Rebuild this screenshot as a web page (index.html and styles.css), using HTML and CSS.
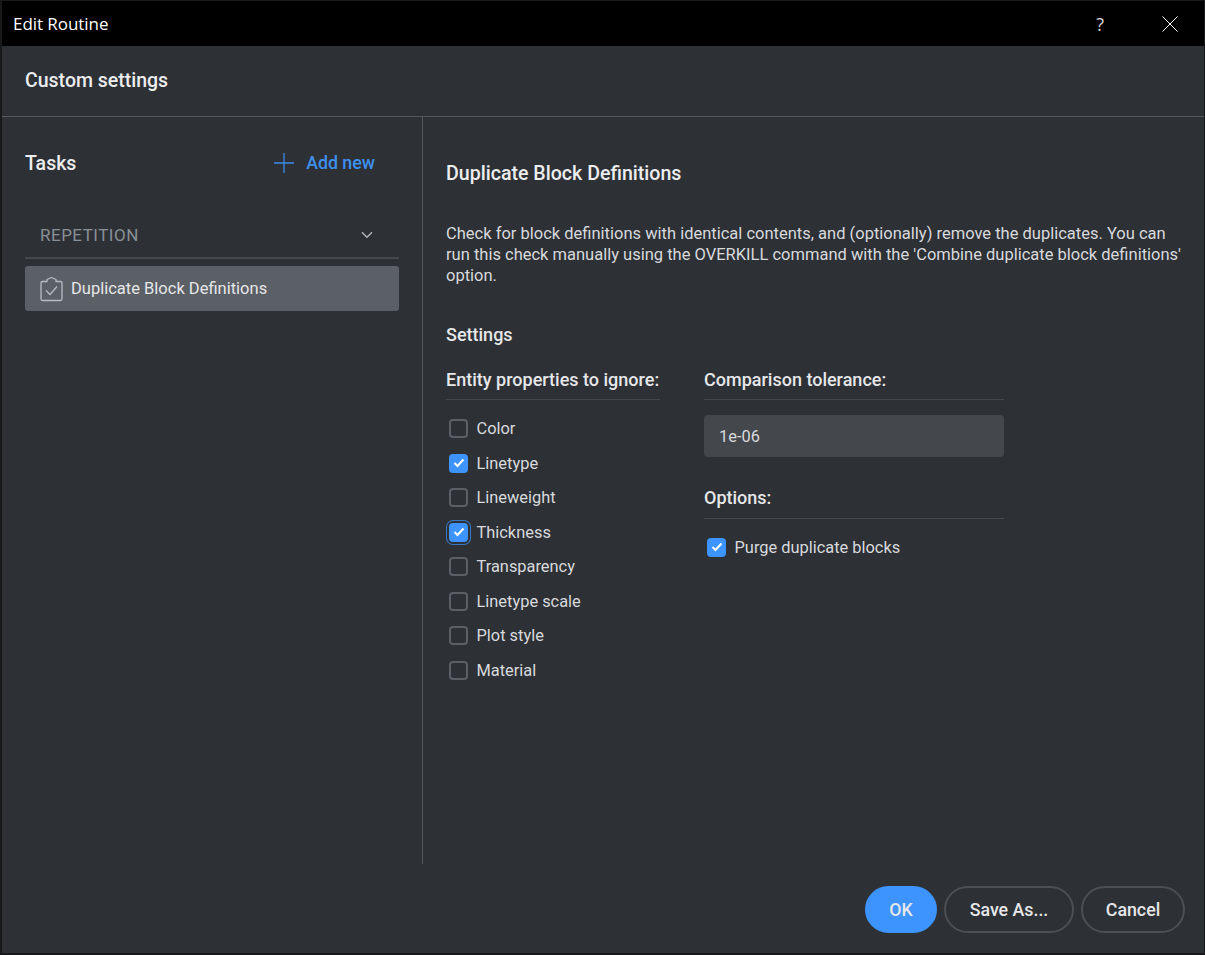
FILE: index.html
```html
<!DOCTYPE html>
<html lang="en">
<head>
<meta charset="utf-8">
<title>Edit Routine</title>
<link rel="stylesheet" href="styles.css">
</head>
<body>
<div class="window">
  <header class="titlebar">
    <span class="title">Edit Routine</span>
    <div class="title-actions">
      <span class="help">?</span>
      <svg class="close" width="16" height="16" viewBox="0 0 16 16"><path d="M.5.5l15 15M15.500.5l-15 15" stroke="#fff" stroke-width="1" fill="none"/></svg>
    </div>
  </header>
  <div class="heading"><h1>Custom settings</h1></div>
  <div class="main">
    <aside class="sidebar">
      <div class="tasks-head">
        <h2>Tasks</h2>
        <div class="add-new">
          <svg width="20" height="20" viewBox="0 0 20 20"><path d="M10 0v20M0 10h20" stroke="#3a8be8" stroke-width="1.300" fill="none"/></svg>
          <span>Add new</span>
        </div>
      </div>
      <div class="group"><span>REPETITION</span>
        <svg width="12" height="8" viewBox="0 0 12 8"><path d="M1 1.200l5 5 5-5" stroke="#b4b8bd" stroke-width="1.400" fill="none"/></svg>
      </div>
      <div class="task">
        <svg width="24" height="26" viewBox="0 0 24 26"><path d="M8 5.500H3.500A1.500 1.500 0 0 0 2 7v16a1.500 1.500 0 0 0 1.500 1.500h18a1.500 1.500 0 0 0 1.500-1.500V7a1.500 1.500 0 0 0-1.500-1.500H17v-2l-4.500-2-4.500 2z" stroke="#b9bdc2" stroke-width="1.300" fill="none" stroke-linejoin="round"/><path d="M7 14.500l4 4 7-8" stroke="#b9bdc2" stroke-width="1.200" fill="none"/></svg>
        <span>Duplicate Block Definitions</span>
      </div>
    </aside>
    <section class="content">
      <h2 class="content-title">Duplicate Block Definitions</h2>
      <p class="desc">Check for block definitions with identical contents, and (optionally) remove the duplicates. You can run this check manually using the OVERKILL command with the 'Combine duplicate block definitions' option.</p>
      <h3 class="settings">Settings</h3>
      <div class="columns">
        <div class="col-left">
          <h4 class="col-head">Entity properties to ignore:</h4>
          <ul class="checks">
            <li class="check"><span class="box"></span>Color</li>
            <li class="check"><span class="box on"><svg width="12" height="10" viewBox="0 0 12 10"><path d="M1.500 5l3 3 6-6.500" stroke="#fff" stroke-width="2" fill="none"/></svg></span>Linetype</li>
            <li class="check"><span class="box"></span>Lineweight</li>
            <li class="check"><span class="box on focus"><svg width="12" height="10" viewBox="0 0 12 10"><path d="M1.500 5l3 3 6-6.500" stroke="#fff" stroke-width="2" fill="none"/></svg></span>Thickness</li>
            <li class="check"><span class="box"></span>Transparency</li>
            <li class="check"><span class="box"></span>Linetype scale</li>
            <li class="check"><span class="box"></span>Plot style</li>
            <li class="check"><span class="box"></span>Material</li>
          </ul>
        </div>
        <div class="col-right">
          <h4 class="col-head">Comparison tolerance:</h4>
          <div class="input">1e-06</div>
          <h4 class="col-head options">Options:</h4>
          <div class="check purge"><span class="box on"><svg width="12" height="10" viewBox="0 0 12 10"><path d="M1.500 5l3 3 6-6.500" stroke="#fff" stroke-width="2" fill="none"/></svg></span>Purge duplicate blocks</div>
        </div>
      </div>
    </section>
  </div>
  <footer class="footer">
    <button class="btn primary">OK</button>
    <button class="btn save">Save As...</button>
    <button class="btn cancel">Cancel</button>
  </footer>
</div>
</body>
</html>
```
FILE: styles.css
```css
* { box-sizing: border-box; }
html, body { margin: 0; height: 100%; }
body { background: #1c1d20; overflow: hidden; }
.window {
  height: 955px;
  padding: 1px 1px 2px 2px;
  display: flex;
  flex-direction: column;
  background: #18191b;
  font-family: Roboto, sans-serif;
  font-size: 16.400px;
  color: #d8dadd;
}
.titlebar {
  height: 45px;
  flex: none;
  background: #000;
  color: #fff;
  display: flex;
  align-items: center;
  justify-content: space-between;
  padding: 0 26px 0 11px;
}
.title { font-family: "Open Sans", sans-serif; font-size: 17px; letter-spacing: -0.05px; }
.title-actions { display: flex; align-items: center; gap: 58px; }
.help { font-family: "Open Sans", sans-serif; font-size: 18px; color: #d5d5d5; }
.heading, .main, .footer { background: #2d3035; }
.heading {
  height: 71px;
  flex: none;
  display: flex;
  align-items: center;
  padding: 0 0 2px 23px;
  border-bottom: 1px solid #55585d;
}
h1, h2, h3, h4 { margin: 0; font-weight: 500; }
h1 { font-size: 19.500px; color: #ecedee; }
.main { flex: 1; display: flex; min-height: 0; }
.sidebar {
  width: 421px;
  flex: none;
  padding: 0 23px;
  border-right: 1px solid #55585d;
}
.tasks-head {
  height: 91px;
  display: flex;
  align-items: center;
  justify-content: space-between;
  padding: 0 24px 0 0;
}
.tasks-head h2 { font-size: 19.500px; color: #ecedee; margin-top: 2px; }
.add-new { display: flex; align-items: center; gap: 12px; color: #3f8fee; font-weight: 500; }
.add-new span { font-size: 17.800px; }
.group {
  height: 50px;
  margin-top: 1px;
  display: flex;
  align-items: center;
  justify-content: space-between;
  padding: 3px 26px 0 15px;
  border-bottom: 2px solid #44474c;
  color: #899097;
  font-size: 17px;
  letter-spacing: 0.5px;
}
.task {
  height: 45px;
  margin-top: 7px;
  display: flex;
  align-items: center;
  gap: 8px;
  padding: 0 0 0 14px;
  border-radius: 3px;
  background: #5b5f66;
  color: #e6e7e9;
  font-size: 16.500px;
}
.content { flex: 1; padding: 0 20px 0 23px; min-width: 0; }
.content-title { font-size: 19.600px; margin-top: 45px; line-height: 23px; color: #ecedee; }
.desc { margin: 38px 0 0; line-height: 21px; font-size: 16.500px; color: #d8dadd; }
.settings { font-size: 18px; margin-top: 38px; line-height: 22px; color: #e6e7e9; }
.columns { display: flex; gap: 44px; margin-top: 23px; }
.col-left { width: 214px; }
.col-right { width: 300px; }
.col-head {
  font-size: 18px;
  line-height: 21px;
  padding-bottom: 9px;
  border-bottom: 1px solid #44474c;
  color: #e6e7e9;
}
.checks { list-style: none; margin: 11.250px 0 0; padding: 0; }
.check { display: flex; align-items: center; gap: 8.500px; height: 34.500px; padding-left: 3px; }
.box {
  width: 19px;
  height: 19px;
  flex: none;
  border: 2px solid #5b5f66;
  border-radius: 4px;
  display: flex;
  align-items: center;
  justify-content: center;
}
.box.on { background: #3d94ff; border-color: #3d94ff; }
.box.focus { box-shadow: 0 0 0 2px #2d3035, 0 0 0 3px #3a78c4; }
.input {
  height: 42px;
  margin-top: 15px;
  padding-left: 15px;
  display: flex;
  align-items: center;
  border-radius: 4px;
  background: #44474c;
  color: #d8dadd;
}
.options { margin-top: 30px; }
.options { padding-bottom: 10px; }
.purge { margin-top: 11px; }
.footer {
  height: 89px;
  flex: none;
  display: flex;
  justify-content: flex-end;
  align-items: flex-start;
  gap: 7px;
  padding: 22px 19px 0 0;
}
.btn {
  height: 47px;
  border-radius: 24px;
  border: 2px solid #4c4f54;
  background: transparent;
  color: #e6e7e9;
  font-family: Roboto, sans-serif;
  font-size: 17.800px;
  font-weight: 500;
  padding: 0 0 1px;
}
.primary { width: 72px; background: #3d94ff; border-color: #3d94ff; }
.save { width: 130px; }
.cancel { width: 104px; }
```
